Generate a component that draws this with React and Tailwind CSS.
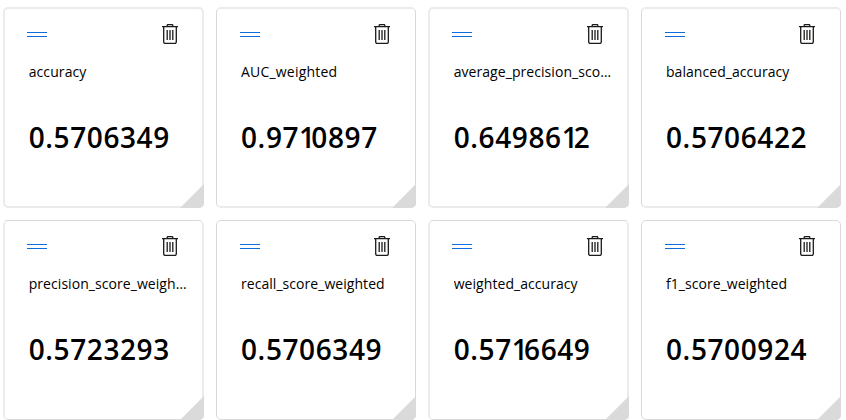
import React from "react";

const metrics = [
  { name: "accuracy", value: "0.5706349", tracking: "tracking-[0.1px]" },
  { name: "AUC_weighted", value: "0.9710897", tracking: "tracking-[0.2px]" },
  { name: "average_precision_score_weighted", value: "0.6498612", tracking: "tracking-[0.06px]" },
  { name: "balanced_accuracy", value: "0.5706422", tracking: "tracking-[0.05px]" },
  { name: "precision_score_weighted", value: "0.5723293", tracking: "tracking-[0.06px]" },
  { name: "recall_score_weighted", value: "0.5706349", tracking: "tracking-[0.05px]" },
  { name: "weighted_accuracy", value: "0.5716649", tracking: "tracking-[0.06px]" },
  { name: "f1_score_weighted", value: "0.5700924", tracking: "tracking-[0.05px]" },
];

function TrashIcon() {
  return (
    <svg width="16" height="20" viewBox="0 0 16 20" fill="none" stroke="#1b1a19" strokeWidth="1.3">
      <path d="M0 2.6H16M5.2 2.6V1.4Q5.2 .6 6 .6H10Q10.8 .6 10.8 1.4V2.6" />
      <path d="M1.7 2.6V18Q1.7 19.4 3.1 19.4H12.9Q14.3 19.4 14.3 18V2.6" />
      <path d="M5.2 6V16M8 6V16M10.8 6V16" />
    </svg>
  );
}

// The figure one is set tighter than the other digits.
function MetricValue({ value }) {
  const parts = value.split("1");
  return parts.map((part, i) => (
    <React.Fragment key={i}>
      {i > 0 && <span className="tracking-[-3.8px]">1</span>}
      {part}
    </React.Fragment>
  ));
}

function MetricCard({ metric, wide, tall }) {
  const sides = wide ? "border-x-2 border-x-[#ebebeb] pl-[23px] pr-[14px]" : "border-x border-x-[#d9d9d9] pl-6 pr-[14px]";
  const ends = tall ? "border-y-2 border-y-[#ebebeb] pt-[15px]" : "border-y border-y-[#d9d9d9] pt-[15px]";
  return (
    <section className={`relative flex flex-col rounded-[5px] bg-white ${sides} ${ends}`}>
      <header className={`flex h-5 justify-between ${wide ? "pr-[10px]" : "pr-[11px]"}`}>
        <div className="-ml-px mt-2 h-[5px] w-5 border-y border-[#0f6cdd]" />
        <TrashIcon />
      </header>
      <h2 className={`mt-[18px] h-5 w-[160px] truncate text-sm font-normal leading-5 ${metric.tracking} ${wide ? "ml-[0.7px]" : ""}`}>{metric.name}</h2>
      <p className={`mt-[35px] h-10 text-[28px] font-semibold leading-10 tracking-[0.6px] ${wide ? "ml-[0.7px]" : ""}`}>
        <MetricValue value={metric.value} />
      </p>
      <div className={`absolute size-6 rounded-br-[5px] bg-[#dadada] [clip-path:polygon(100%_0,100%_100%,0_100%)] ${wide ? "-right-[2px]" : "-right-px"} ${tall ? "-bottom-[2px]" : "-bottom-px"}`} />
    </section>
  );
}

export default function App() {
  return (
    <main className="grid h-[420px] w-[846px] grid-cols-[201px_200px_201px_200px] grid-rows-[201px_200px] gap-3 overflow-hidden bg-white pl-[3px] pt-[7px] font-['Open_Sans','Noto_Sans',sans-serif] text-black">
      {metrics.map((metric, i) => (
        <MetricCard key={metric.name} metric={metric} wide={i % 2 === 0} tall={i < 4} />
      ))}
    </main>
  );
}
